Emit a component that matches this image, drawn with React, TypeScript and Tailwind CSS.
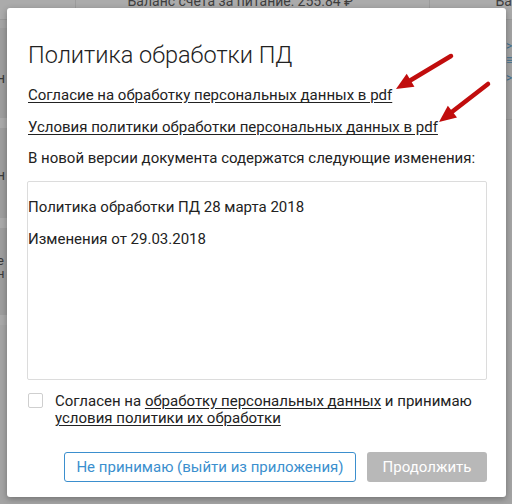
import React from "react";

function Arrow({ x1, y1, x2, y2 }: { x1: number; y1: number; x2: number; y2: number }) {
  const ang = Math.atan2(y2 - y1, x2 - x1);
  const L = 17;
  const W = 7.5;
  const bx = x2 - L * Math.cos(ang);
  const by = y2 - L * Math.sin(ang);
  const px = -Math.sin(ang) * W;
  const py = Math.cos(ang) * W;
  return (
    <g>
      <line x1={x1} y1={y1} x2={bx} y2={by} stroke="#c10d0d" strokeWidth={4.5} strokeLinecap="round" />
      <polygon points={`${x2},${y2} ${bx + px},${by + py} ${bx - px},${by - py}`} fill="#c10d0d" />
    </g>
  );
}

export default function App() {
  return (
    <div className="relative w-[512px] h-[504px] overflow-hidden bg-[#a4a4a4]" style={{ fontFamily: "Roboto, 'Noto Sans', sans-serif" }}>
      {/* dimmed background page */}
      <div className="absolute inset-0">
        <div className="h-[20px] bg-[#ababab] border-b border-[#9a9a9a] flex">
          <div className="w-[77px] border-r border-[#9c9c9c]"></div>
          <div className="w-[360px] border-r border-[#9c9c9c] text-[14px] leading-[14px] text-[#3e3e3e] pl-[52px] -mt-[6px]">Баланс счета за питание: 255.84 ₽</div>
          <div className="flex-1 text-[14px] leading-[14px] text-[#3e3e3e] pl-[66px] -mt-[6px]">Ба</div>
        </div>
        <div className="flex flex-col w-[7px] mt-[8px] text-[14px] text-[#3a3a3a] leading-[14px]">
          <div className="h-[90px] bg-[#9d9d9d] pt-[43px] -ml-[3px]">н</div>
          <div className="h-[10px] bg-[#a9a9a9]"></div>
          <div className="h-[90px] bg-[#9d9d9d] pt-[40px] -ml-[3px]">н</div>
          <div className="h-[10px] bg-[#a9a9a9]"></div>
          <div className="h-[87px] bg-[#9d9d9d] pt-[26px] -ml-[3px] text-[13px] leading-[13px]">е<br />н</div>
          <div className="h-[10px] bg-[#a9a9a9]"></div>
        </div>
        <div className="absolute right-0 top-[20px] w-[7px] h-[100px] bg-[#a2a2a2] border-b border-[#959595]">
          <div className="mt-[20px] ml-[1px] text-[#3d6f8f] text-[12px] leading-[12px]">&gt;</div>
          <div className="mt-[2px] ml-[1px] text-[#3d6f8f] text-[12px] leading-[12px]">≡</div>
          <div className="mt-[6px] ml-[1px] text-[#3d6f8f] text-[12px] leading-[12px]">&gt;</div>
        </div>
      </div>

      {/* modal */}
      <div className="absolute left-[7px] top-[8px] w-[499px] h-[489px] bg-white rounded-[3px] shadow-[0_2px_6px_rgba(0,0,0,0.3)] pl-[21px] pr-[20px] pt-[32px] text-[#222]">
        <h1 className="text-[23.5px] leading-[30px] font-light text-[#222]">Политика обработки ПД</h1>
        <div className="mt-[15px] text-[15px] leading-[20px]">
          <a className="underline underline-offset-[2px] text-[#222]">Согласие на обработку персональных данных в pdf</a>
        </div>
        <div className="mt-[12px] text-[15px] leading-[20px]">
          <a className="underline underline-offset-[2px] text-[#222]">Условия политики обработки персональных данных в pdf</a>
        </div>
        <div className="mt-[11px] text-[15px] leading-[20px]">В новой версии документа содержатся следующие изменения:</div>
        <div className="mt-[13px] -ml-[1px] w-[460px] h-[199px] border border-[#dcdcdc] rounded-[2px] pt-[15px] text-[15px] leading-[20px]">
          <div>Политика обработки ПД 28 марта 2018</div>
          <div className="mt-[12px]">Изменения от 29.03.2018</div>
        </div>
        <div className="mt-[12px] flex items-start">
          <div className="mt-[1px] w-[15px] h-[15px] border border-[#cfcfcf] rounded-[2px] shrink-0"></div>
          <div className="ml-[12px] text-[15px] leading-[17px] mt-[1px]">
            Согласен на <a className="underline underline-offset-[2px]">обработку персональных данных</a> и принимаю{" "}
            <a className="underline underline-offset-[2px]">условия политики их обработки</a>
          </div>
        </div>
        <div className="mt-[25px] flex justify-end gap-[11px] mr-[-1px]">
          <button className="h-[30px] w-[292px] border border-[#3b8fce] rounded-[3px] text-[#3b8fce] text-[15px] leading-[28px]">
            Не принимаю (выйти из приложения)
          </button>
          <button className="h-[30px] w-[120px] bg-[#b8b8b8] rounded-[3px] text-white text-[15px] leading-[30px]">
            Продолжить
          </button>
        </div>
      </div>

      <svg className="absolute inset-0 pointer-events-none" width={512} height={504}>
        <Arrow x1={451} y1={56} x2={396} y2={89} />
        <Arrow x1={488} y1={84} x2={439} y2={122} />
      </svg>
    </div>
  );
}
